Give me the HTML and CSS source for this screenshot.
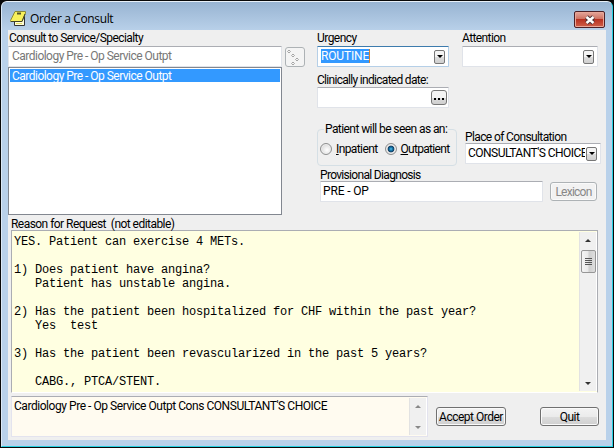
FILE: index.html
```html
<!DOCTYPE html>
<html lang="en">
<head>
<meta charset="utf-8">
<title>Order a Consult</title>
<link rel="stylesheet" href="styles.css">
</head>
<body>
<main class="window">
  <header class="titlebar">
    <svg class="app-icon" width="17" height="17" viewBox="0 0 17 17">
      <path d="M4.500 4v11.500h10V2" fill="#fffcd8" stroke="#333"/>
      <path d="M5 1.500h10.500v1.500L12 11.500H.5v-1z" fill="#f8f15c" stroke="#8a8a3a"/>
      <path d="M1 11.500h11L15 4" fill="none" stroke="#444426"/>
      <path d="M7 3.500h4" stroke="#55552a" stroke-width="2"/>
      <path d="M6 13.500h6" stroke="#e5dd66"/>
    </svg>
    <h1>Order a Consult</h1>
    <button class="close" aria-label="Close"><svg width="12" height="10" viewBox="0 0 12 10"><path d="M2.5 2l7 6M9.5 2l-7 6" stroke="#4b3338" stroke-width="4.4"/><path d="M2.5 2l7 6M9.5 2l-7 6" stroke="#fff" stroke-width="2.5"/></svg></button>
  </header>
  <section class="client">
    <div class="top">
      <div class="service">
        <label class="t-service">Consult to Service/Specialty</label>
        <div class="service-row">
          <div class="field disabled"><span class="t-item">Cardiology Pre - Op Service Outpt</span></div>
          <button class="dots" aria-label="Service tree"><svg width="18" height="18" viewBox="0 0 18 18" fill="none" stroke="#a5a5a5"><path d="M3 2L4.500 3.500 3 5 1.500 3.500zM7 6l1.500 1.500L7 9 5.500 7.500zM11 10l1.500 1.500L11 13l-1.500-1.500zM7 14l1.500 1.500L7 17l-1.500-1.500z"/></svg></button>
        </div>
        <div class="list"><div class="selected"><span class="t-item">Cardiology Pre - Op Service Outpt</span></div></div>
      </div>
      <div class="details">
        <div class="row first">
          <div class="urgency">
            <label class="t-urgency">Urgency</label>
            <div class="field focus"><span class="mark t-routine">ROUTINE</span><i class="drop"></i></div>
          </div>
          <div class="attention">
            <label class="t-attention">Attention</label>
            <div class="field"><i class="drop"></i></div>
          </div>
        </div>
        <div class="date">
          <label class="t-date">Clinically indicated date:</label>
          <div class="field"><i class="more"><b></b><b></b><b></b></i></div>
        </div>
        <div class="row third">
          <fieldset>
            <legend class="t-seen">Patient will be seen as an:</legend>
            <div class="radios">
              <span class="radio"></span><span class="t-in"><u>I</u>npatient</span>
              <span class="radio on"></span><span class="t-out"><u>O</u>utpatient</span>
            </div>
          </fieldset>
          <div class="place">
            <label class="t-place">Place of Consultation</label>
            <div class="field"><span class="clip t-choice">CONSULTANT'S CHOICE</span><i class="drop"></i></div>
          </div>
        </div>
        <div class="row diagnosis">
          <div class="diag">
            <label class="t-diag">Provisional Diagnosis</label>
            <div class="field"><span class="t-preop">PRE - OP</span></div>
          </div>
          <button class="btn lexicon" disabled><span class="t-lex">Lexicon</span></button>
        </div>
      </div>
    </div>
    <label class="reason-label t-reason">Reason for Request &nbsp;(not editable)</label>
    <div class="memo">
<pre>YES. Patient can exercise 4 METs.

1) Does patient have angina?
   Patient has unstable angina.

2) Has the patient been hospitalized for CHF within the past year?
   Yes  test

3) Has the patient been revascularized in the past 5 years?

   CABG., PTCA/STENT.</pre>
      <div class="scroll">
        <i class="up"></i><div class="thumb"><b></b><b></b><b></b><b></b></div><i class="down"></i>
      </div>
    </div>
    <footer>
      <div class="summary"><span class="t-summary">Cardiology Pre - Op Service Outpt Cons CONSULTANT'S CHOICE</span>
        <div class="scroll dim"><i class="up"></i><i class="down"></i></div>
      </div>
      <button class="btn accept"><span class="t-accept">Accept Order</span></button>
      <button class="btn quit"><span class="t-quit">Quit</span></button>
    </footer>
  </section>
</main>
</body>
</html>
```
FILE: styles.css
```css
* { box-sizing: border-box; }
body { margin: 0; width: 614px; height: 448px; overflow: hidden; background: #080808; font: 12px/16px Roboto, "Liberation Sans", sans-serif; color: #000; }
h1, pre, fieldset, legend, button { margin: 0; padding: 0; font: inherit; }
i, b { display: block; flex: none; }
label { display: block; white-space: nowrap; }
span { white-space: nowrap; }
svg { display: block; }
.window { margin: 1px 1px 0; height: 446px; border: 1px solid #25cfe0; border-top-color: #e8f0f8; border-left-color: #dce9f6; border-radius: 6px 6px 0 0; background: #b9d1ea; padding: 0 6px; }
.titlebar { height: 28px; margin: 0 -6px; padding: 0 7px 0 8px; display: flex; align-items: center; background: linear-gradient(#98b4d2, #b8d0e9); border-radius: 5px 5px 0 0; }
.app-icon { margin-top: 4px; }
h1 { margin: 5px 0 0 3px; font: 12px/20px "Open Sans", "Noto Sans", sans-serif; flex: 1; letter-spacing: -.36px; }
.close { width: 31px; height: 17px; margin-top: 7px; display: flex; align-items: center; justify-content: center; border: 1px solid #4c2027; border-radius: 2px; background: linear-gradient(#e4a79c 0, #d07363 45%, #b83222 50%, #d0604a 100%); box-shadow: inset 0 0 0 1px #e9a698; }
.client { height: 410px; background: #efefef; }
.top { height: 187px; display: flex; }
.service { width: 297px; }
.service label { padding-left: 1px; }
.service-row { display: flex; height: 21px; gap: 3px; }
.service-row .field { width: 274px; }
.field { height: 21px; background: #fff; border: 1px solid #e0e3e9; border-top-color: #abadb3; border-radius: 1px; display: flex; align-items: center; padding: 0 3px 1px; }
.disabled { color: #777; }
.dots { width: 20px; height: 20px; margin-top: 1px; border: 1px solid #adb2b5; border-radius: 3px; background: #f4f4f4; }
.list { width: 274px; height: 148px; background: #fff; border: 1px solid #828790; padding: 1px; }
.selected { height: 13px; background: #3399ff; color: #fff; display: flex; align-items: center; padding-left: 2px; }
.details { margin-left: 12px; width: 286px; }
.row { display: flex; }
.first { gap: 13px; height: 42px; }
.urgency { width: 132px; }
.attention { width: 136px; }
.focus { border-color: #b5cfe7; border-top-color: #3d7bad; }
.mark { background: #3399ff; color: #fff; line-height: 14px; border-right: 1px solid #d08030; }
.drop { width: 11px; height: 14px; margin: 1px 0 0 auto; border: 1px solid #777; border-radius: 2px; background: linear-gradient(#f4f4f4 50%, #ddd 50%, #cfcfcf); display: flex; align-items: center; justify-content: center; }
.drop::after { content: ""; border: 3px solid transparent; border-top-color: #000; border-bottom: 0; }
.date { width: 132px; height: 45px; }
.date label { height: 15px; line-height: 17px; }
.date .field { padding-right: 1px; }
.more { width: 16px; height: 15px; margin-left: auto; border: 1px solid #777; border-radius: 3px; background: linear-gradient(#f4f4f4 50%, #ddd 50%, #cfcfcf); display: flex; gap: 2px; align-items: flex-end; justify-content: center; padding-bottom: 4px; }
.more b { width: 2px; height: 2px; background: #000; }
.third { height: 48px; margin-top: 4px; }
fieldset { width: 140px; height: 45px; border: 1px solid #d5dfe5; border-radius: 4px; min-width: 0; }
legend { margin-left: 6px; padding: 0 1px; white-space: nowrap; }
.radios { display: flex; align-items: center; padding-left: 2px; margin-top: 4px; }
.radio { width: 12px; height: 12px; flex: none; border: 1px solid #8e8f8f; border-radius: 50%; background: radial-gradient(circle at 60% 60%, #fff, #ccc); box-shadow: inset 0 0 0 1px #eee; }
.on { background: radial-gradient(circle, #5ac4f0 0, #1678ab 22%, #12395d 44%, #ddd 52%); }
.radio + span { margin-left: 4px; }
.radios .on { margin-left: 7px; }
.place { width: 136px; margin: 8px 0 0 8px; }
.place label { height: 14px; line-height: 16px; }
.place .field { padding-left: 2px; }
.clip { width: 117px; overflow: hidden; }
.place .drop { margin-left: 1px; }
.diagnosis { padding-left: 3px; gap: 7px; }
.diag { width: 223px; }
.diag label { height: 13px; line-height: 15px; margin-top: -1px; }
.btn { display: flex; align-items: center; justify-content: center; border: 1px solid #707070; border-radius: 3px; background: linear-gradient(#f3f3f3 0, #ebebeb 50%, #ddd 51%, #cfcfcf); box-shadow: inset 0 0 0 1px #fafafa; color: #000; }
.lexicon { width: 47px; height: 19px; margin-top: 13px; background: #f2f2f2; color: #888; border-color: #adb2b5; }
.reason-label { padding-left: 3px; height: 13px; line-height: 14px; }
.memo { width: 587px; height: 163px; margin-left: 3px; border: 1px solid #abadb3; border-bottom-color: #fff; background: #ffffe1; display: flex; justify-content: space-between; padding: 1px; }
pre { font: 12px/14px "Liberation Mono", monospace; letter-spacing: -.2px; padding: 3px 0 0 1px; }
.scroll { width: 17px; background: #f0f0f0; border-left: 1px solid #e2e2e2; display: flex; flex-direction: column; align-items: center; box-shadow: 1px 0 #fff; }
.up, .down { border: 3px solid transparent; border-bottom-color: #333; border-top: 0; margin-top: 7px; }
.down { border: 3px solid transparent; border-top-color: #333; border-bottom: 0; margin: auto 0 6px; }
.thumb { width: 15px; height: 23px; margin-top: 8px; border: 1px solid #969696; border-radius: 2px; background: linear-gradient(90deg, #f4f4f4, #e8e8e8 48%, #cecece 52%, #dedede); display: flex; flex-direction: column; align-items: center; justify-content: center; gap: 1px; }
.thumb b { width: 7px; height: 1px; background: #555; }
footer { height: 47px; display: flex; padding: 3px 7px 0 3px; }
.summary { width: 417px; height: 41px; border: 1px solid #e3e3ee; border-top-color: #abadb3; background: #fffbf0; display: flex; justify-content: space-between; padding: 1px 1px 1px 2px; }
.dim .up { border-bottom-color: #888; }
.dim .down { border-top-color: #888; }
.accept { width: 70px; height: 19px; margin: 11px 0 0 8px; }
.quit { width: 59px; height: 19px; margin: 11px 0 0 auto; }

/* tracking that gives each caption its compact bitmap-font width */
.t-service { letter-spacing: -.57px; }
.t-item { letter-spacing: -.52px; }
.t-urgency { letter-spacing: -.55px; }
.t-attention { letter-spacing: -.6px; }
.t-date { letter-spacing: -.7px; }
.t-seen { letter-spacing: -.58px; }
.t-place { letter-spacing: -.62px; }
.t-choice { letter-spacing: -.53px; }
.t-diag { letter-spacing: -.68px; }
.t-preop { letter-spacing: -.15px; margin-left: -1px; }
.t-reason { letter-spacing: -.54px; }
.t-routine { letter-spacing: -.15px; }
.t-summary { letter-spacing: -.45px; }
.t-accept { letter-spacing: -.5px; }
.t-in { letter-spacing: -.6px; }
.t-out { letter-spacing: -.7px; }
.t-lex { letter-spacing: -.75px; }
.t-quit { letter-spacing: -.5px; }
```
